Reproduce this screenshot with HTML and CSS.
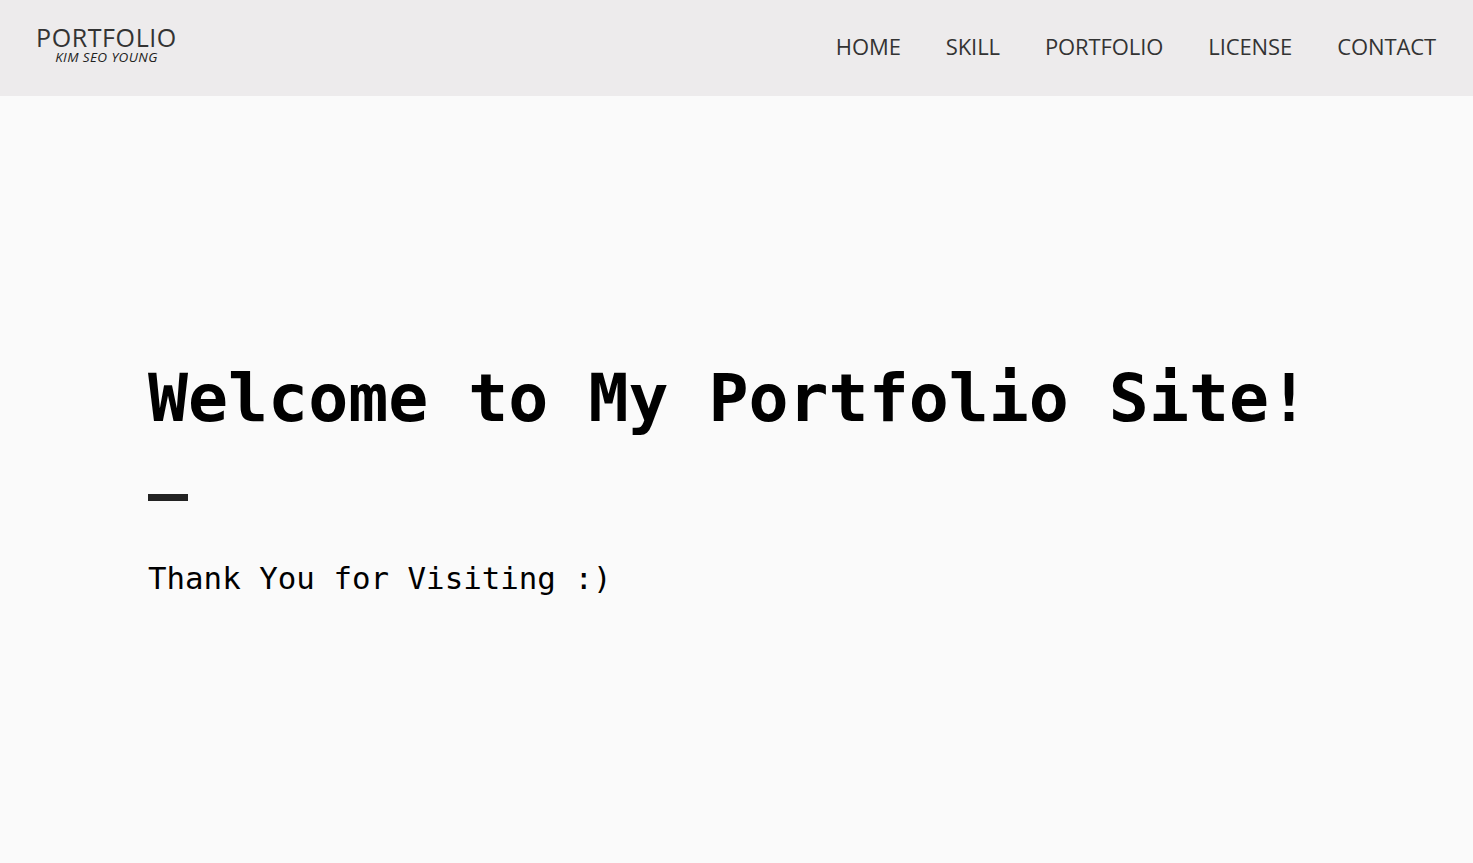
FILE: index.html
```html
<!DOCTYPE html>
<html lang="ko">
<head>
<meta charset="utf-8">
<title>Portfolio - Kim Seo Young</title>
<link rel="stylesheet" href="styles.css">
</head>
<body>
<header class="header">
  <a class="logo" href="#">
    <span class="logo-title">PORTFOLIO</span>
    <span class="logo-sub">KIM SEO YOUNG</span>
  </a>
  <nav class="nav">
    <a href="#">HOME</a>
    <a href="#">SKILL</a>
    <a href="#">PORTFOLIO</a>
    <a href="#">LICENSE</a>
    <a href="#">CONTACT</a>
  </nav>
</header>
<main class="hero">
  <h1 class="hero-title">Welcome to My Portfolio Site!</h1>
  <div class="hero-bar"></div>
  <p class="hero-text">Thank You for Visiting :)</p>
</main>
</body>
</html>
```

FILE: styles.css
```css
* { box-sizing: border-box; }
html, body { margin: 0; padding: 0; }
body {
  background: #fafafa;
  font-family: "Open Sans", "Noto Sans", sans-serif;
  color: #333;
  height: 863px;
  overflow: hidden;
}
a { color: inherit; text-decoration: none; }
.header {
  height: 96px;
  background: #edebec;
  display: flex;
  align-items: center;
  justify-content: space-between;
  padding: 0 37px 0 36px;
}
.logo {
  display: flex;
  flex-direction: column;
  align-items: center;
  margin-top: -8px;
}
.logo-title {
  font-size: 25px;
  line-height: 26px;
  font-weight: 400;
  color: #333;
  letter-spacing: 0.6px;
}
.logo-sub {
  font-size: 13.5px;
  line-height: 15px;
  font-style: italic;
  color: #222;
  letter-spacing: 0.4px;
}
.nav {
  display: flex;
  gap: 45px;
  margin-top: -5px;
}
.nav a {
  font-size: 22px;
  line-height: 30px;
  color: #333;
  letter-spacing: -0.1px;
}
.hero {
  padding: 262px 148px 0;
  font-family: "DejaVu Sans Mono", monospace;
  color: #000;
}
.hero-title {
  margin: 0;
  font-size: 66.5px;
  line-height: 80px;
  font-weight: 700;
}
.hero-bar {
  width: 40px;
  height: 7px;
  background: #222;
  margin-top: 56px;
}
.hero-text {
  margin: 57px 0 0;
  font-size: 30.8px;
  line-height: 40px;
}
```
